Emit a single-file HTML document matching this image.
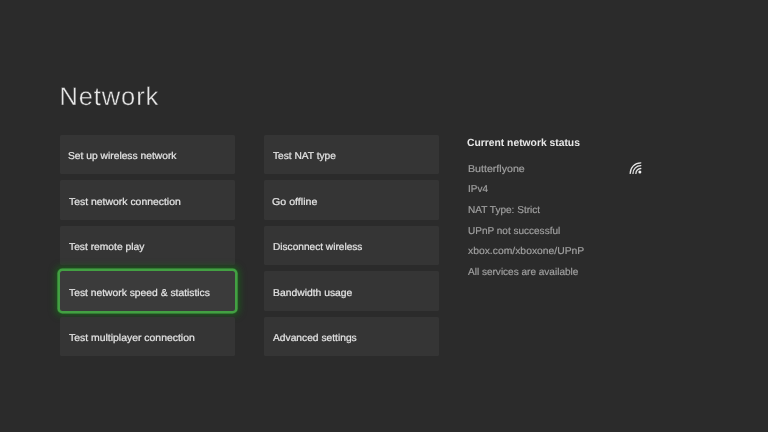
<!DOCTYPE html>
<html><head><meta charset="utf-8">
<style>
html,body{margin:0;padding:0;}
body{width:768px;height:432px;overflow:hidden;background:#2b2b2b;position:relative;font-family:"Liberation Sans",sans-serif;text-rendering:geometricPrecision;}
#w{position:absolute;left:0;top:0;width:768px;height:432px;will-change:transform;}
.t{position:absolute;white-space:nowrap;line-height:11px;transform-origin:0 0;}
.tile{position:absolute;width:175px;background:#353535;border-radius:1.5px;}
.c1{left:60px}.c2{left:264px}
.focus{background:#3b3b3b;box-shadow:0 0 0 2.6px #43a043, 0 0 1px 3px rgba(40,110,40,0.6), 0 0 6px 5px rgba(25,95,25,0.7);border-radius:2.5px;}
</style></head><body><div id="w">
<div class="t" style="left:59.4px;top:85px;font-size:25.5px;line-height:25px;color:#e6e6e6;-webkit-text-stroke:0.4px #2b2b2b;letter-spacing:0.9px">Network</div>
<div class="tile c1" style="top:135px;height:39px"></div>
<div class="tile c1" style="top:180px;height:40px"></div>
<div class="tile c1" style="top:226px;height:39px"></div>
<div class="tile c1 focus" style="top:271px;height:40px"></div>
<div class="tile c1" style="top:317px;height:39px"></div>
<div class="tile c2" style="top:135px;height:39px"></div>
<div class="tile c2" style="top:180px;height:40px"></div>
<div class="tile c2" style="top:226px;height:39px"></div>
<div class="tile c2" style="top:271px;height:40px"></div>
<div class="tile c2" style="top:317px;height:39px"></div>
<div class="t" style="left:68.15px;top:151px;font-size:10px;color:#e4e4e4;-webkit-text-stroke:0.22px #e4e4e4;transform:scaleX(1.0270)">Set up wireless network</div>
<div class="t" style="left:68.98px;top:197px;font-size:10px;color:#e4e4e4;-webkit-text-stroke:0.22px #e4e4e4;transform:scaleX(1.0419)">Test network connection</div>
<div class="t" style="left:69.06px;top:242px;font-size:10px;color:#e4e4e4;-webkit-text-stroke:0.22px #e4e4e4;transform:scaleX(1.0266)">Test remote play</div>
<div class="t" style="left:68.82px;top:288px;font-size:10px;color:#e4e4e4;-webkit-text-stroke:0.22px #e4e4e4;transform:scaleX(1.0305)">Test network speed &amp; statistics</div>
<div class="t" style="left:68.99px;top:333px;font-size:10px;color:#e4e4e4;-webkit-text-stroke:0.22px #e4e4e4;transform:scaleX(1.0427)">Test multiplayer connection</div>
<div class="t" style="left:272.96px;top:151px;font-size:10px;color:#e4e4e4;-webkit-text-stroke:0.22px #e4e4e4;transform:scaleX(1.0171)">Test NAT type</div>
<div class="t" style="left:272.37px;top:197px;font-size:10px;color:#e4e4e4;-webkit-text-stroke:0.22px #e4e4e4;transform:scaleX(1.0637)">Go offline</div>
<div class="t" style="left:273.13px;top:242px;font-size:10px;color:#e4e4e4;-webkit-text-stroke:0.22px #e4e4e4;transform:scaleX(1.0113)">Disconnect wireless</div>
<div class="t" style="left:272.62px;top:288px;font-size:10px;color:#e4e4e4;-webkit-text-stroke:0.22px #e4e4e4;transform:scaleX(1.0344)">Bandwidth usage</div>
<div class="t" style="left:273.07px;top:333px;font-size:10px;color:#e4e4e4;-webkit-text-stroke:0.22px #e4e4e4;transform:scaleX(1.0242)">Advanced settings</div>
<div class="t" style="left:467.33px;top:138px;font-size:10.5px;font-weight:bold;color:#e8e8e8;transform:scaleX(0.9821)">Current network status</div>
<div class="t" style="left:467.68px;top:164px;font-size:10px;color:#a0a0a0;-webkit-text-stroke:0.18px #a0a0a0;transform:scaleX(1.0626)">Butterflyone</div>
<div class="t" style="left:467.66px;top:184px;font-size:10px;color:#a0a0a0;-webkit-text-stroke:0.18px #a0a0a0;transform:scaleX(0.9951)">IPv4</div>
<div class="t" style="left:467.91px;top:205px;font-size:10px;color:#a0a0a0;-webkit-text-stroke:0.18px #a0a0a0;transform:scaleX(1.0056)">NAT Type: Strict</div>
<div class="t" style="left:468.01px;top:226px;font-size:10px;color:#a0a0a0;-webkit-text-stroke:0.18px #a0a0a0;transform:scaleX(1.0014)">UPnP not successful</div>
<div class="t" style="left:467.93px;top:246px;font-size:10px;color:#a0a0a0;-webkit-text-stroke:0.18px #a0a0a0;transform:scaleX(1.0355)">xbox.com/xboxone/UPnP</div>
<div class="t" style="left:468.43px;top:267px;font-size:10px;color:#a0a0a0;-webkit-text-stroke:0.18px #a0a0a0;transform:scaleX(1.0029)">All services are available</div>
<svg style="position:absolute;left:626px;top:158px" width="20" height="20" viewBox="0 0 20 20">
<g fill="none" stroke="#e6e6e6" stroke-width="1.3" stroke-linecap="round"><path d="M4.20 15.40 A10.6 10.6 0 0 1 14.80 4.80"/><path d="M7.00 15.40 A7.8 7.8 0 0 1 14.80 7.60"/><path d="M9.90 15.40 A4.9 4.9 0 0 1 14.80 10.50"/></g>
<circle cx="13.85" cy="14.05" r="1.5" fill="#f0f0f0"/>
</svg>
</div></body></html>
